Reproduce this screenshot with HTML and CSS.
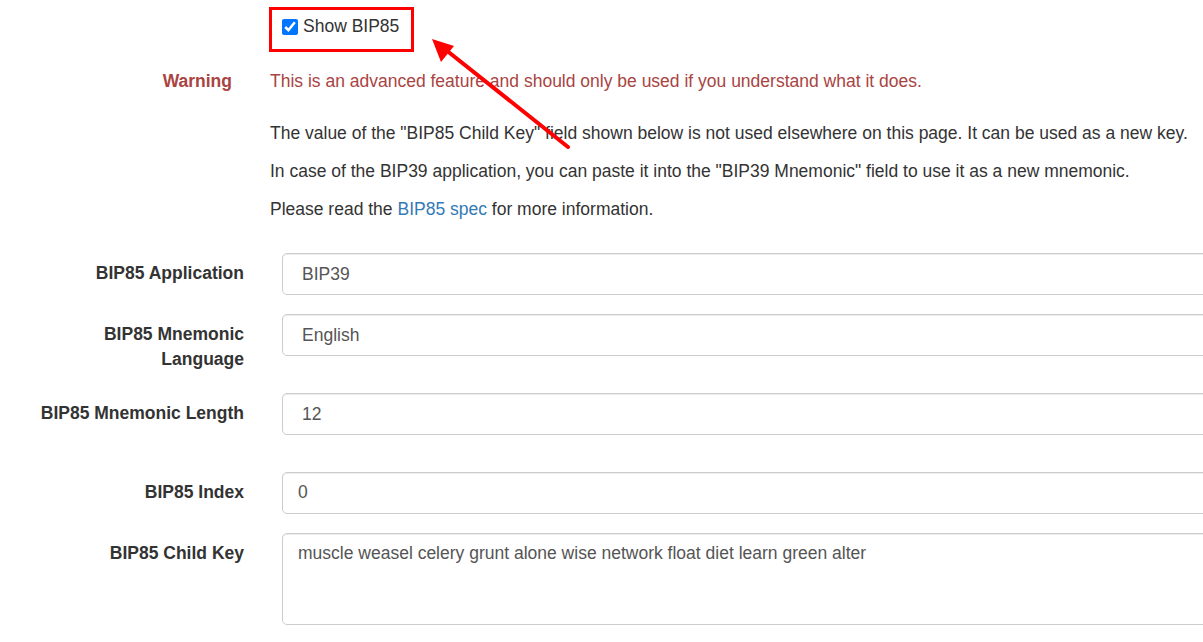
FILE: index.html
```html
<!DOCTYPE html>
<html lang="en">
<head>
    <meta charset="UTF-8">
    <meta name="viewport" content="width=device-width, initial-scale=1.0">
    <title>BIP85</title>
    <link rel="stylesheet" href="styles.css">
</head>
<body>
    <div class="page">
        <div class="form-group toggle-group">
            <div class="control-label"></div>
            <div class="field">
                <label class="checkbox"><input type="checkbox" checked> Show BIP85</label>
            </div>
        </div>

        <div class="form-group notes warning-group">
            <div class="control-label text-danger">Warning</div>
            <div class="field">
                <p class="text-danger">This is an advanced feature and should only be used if you understand what it does.</p>
            </div>
        </div>

        <div class="form-group notes info-group">
            <div class="control-label"></div>
            <div class="field">
                <p>The value of the "BIP85 Child Key" field shown below is not used elsewhere on this page. It can be used as a new key.</p>
                <p>In case of the BIP39 application, you can paste it into the "BIP39 Mnemonic" field to use it as a new mnemonic.</p>
                <p>Please read the <a href="#">BIP85 spec</a> for more information.</p>
            </div>
        </div>

        <div class="form-group">
            <label class="control-label" for="bip85-application">BIP85 Application</label>
            <div class="field">
                <select id="bip85-application" class="form-control">
                    <option>BIP39</option>
                </select>
            </div>
        </div>

        <div class="form-group language-group">
            <label class="control-label" for="bip85-mnemonic-language">BIP85 Mnemonic<br>Language</label>
            <div class="field">
                <select id="bip85-mnemonic-language" class="form-control">
                    <option>English</option>
                </select>
            </div>
        </div>

        <div class="form-group length-group">
            <label class="control-label" for="bip85-mnemonic-length">BIP85 Mnemonic Length</label>
            <div class="field">
                <select id="bip85-mnemonic-length" class="form-control">
                    <option>12</option>
                </select>
            </div>
        </div>

        <div class="form-group">
            <label class="control-label" for="bip85-index">BIP85 Index</label>
            <div class="field">
                <input id="bip85-index" type="text" class="form-control" value="0">
            </div>
        </div>

        <div class="form-group">
            <label class="control-label" for="bip85-child-key">BIP85 Child Key</label>
            <div class="field">
                <textarea id="bip85-child-key" class="form-control" rows="3" readonly>muscle weasel celery grunt alone wise network float diet learn green alter</textarea>
            </div>
        </div>

        <!-- callout pointing at the toggle -->
        <div class="callout-box"></div>
        <svg class="callout-arrow" width="600" height="160" viewBox="0 0 600 160">
            <line x1="568" y1="147" x2="446" y2="50" stroke="#ff0000" stroke-width="4" stroke-linecap="round"/>
            <polygon points="432,39 454,46 441,62" fill="#ff0000"/>
        </svg>
    </div>
</body>
</html>
```

FILE: styles.css
```css
html, body {
    margin: 0;
    padding: 0;
    overflow: hidden;
}

body {
    font-family: "Liberation Sans", Arial, sans-serif;
    font-size: 17.5px;
    line-height: 25px;
    color: #333;
    background: #fff;
}

.page {
    position: relative;
    width: 1320px;
    padding-top: 14px;
}

.form-group {
    display: grid;
    grid-template-columns: 263px 1fr;
    margin-bottom: 19px;
}

.control-label {
    display: block;
    padding: 8.5px 19px 0 0;
    text-align: right;
    font-weight: bold;
}

.field {
    padding: 0 19px;
}

p {
    margin: 0 0 12.5px;
}

a {
    color: #337ab7;
    text-decoration: none;
}

.text-danger {
    color: #a94442;
}

/* checkbox toggle */
.toggle-group {
    margin-bottom: 30px;
}

.checkbox {
    display: flex;
    align-items: center;
    gap: 5px;
    cursor: pointer;
}

.checkbox input {
    width: 16px;
    height: 16px;
    margin: 0;
    accent-color: #0075ff;
}

/* the explanatory rows sit slightly left of the form rows */
.notes {
    margin-left: -12px;
}

.notes .control-label {
    padding-top: 0;
}

.warning-group {
    margin-bottom: 27px;
}

.warning-group p {
    margin: 0;
}

.info-group p {
    margin-bottom: 13px;
}

.info-group {
    margin-bottom: 17.5px;
}

.language-group {
    margin-bottom: 20.5px;
}

.length-group {
    margin-bottom: 37px;
}

.form-control {
    display: block;
    box-sizing: border-box;
    width: 100%;
    height: 42px;
    padding: 7.5px 15px;
    font-family: inherit;
    font-size: 17.5px;
    line-height: 25px;
    color: #555;
    background: #fff;
    border: 1px solid #ccc;
    border-radius: 5px;
    box-shadow: inset 0 1px 1px rgba(0, 0, 0, .075);
}

textarea.form-control {
    height: 92px;
    resize: none;
}

/* annotation overlay */
.callout-box {
    position: absolute;
    left: 269px;
    top: 7px;
    width: 145px;
    height: 45px;
    box-sizing: border-box;
    border: 3px solid #ff0000;
}

.callout-arrow {
    position: absolute;
    left: 0;
    top: 0;
}
```
